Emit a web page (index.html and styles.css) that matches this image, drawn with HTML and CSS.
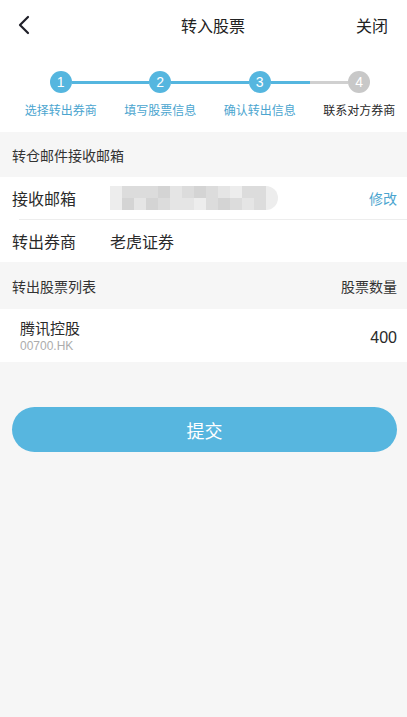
FILE: index.html
```html
<!DOCTYPE html>
<html lang="zh-CN">
<head>
    <meta charset="UTF-8">
    <meta name="viewport" content="width=device-width, initial-scale=1.0">
    <title>转入股票</title>
    <link rel="stylesheet" href="styles.css">
</head>
<body>
    <div class="top">
        <div class="nav">
            <div class="nav-back">
                <svg width="14" height="20" viewBox="0 0 14 20"><path d="M11 2 L3 10 L11 18" fill="none" stroke="#1f1f28" stroke-width="2.2" stroke-linecap="round" stroke-linejoin="round"/></svg>
            </div>
            <div class="nav-title">转入股票</div>
            <div class="nav-close">关闭</div>
        </div>

        <div class="steps">
            <div class="step done">
                <div class="step-track">
                    <span class="half none"></span>
                    <span class="dot">1</span>
                    <span class="half blue"></span>
                </div>
                <div class="step-label">选择转出券商</div>
            </div>
            <div class="step done">
                <div class="step-track">
                    <span class="half blue"></span>
                    <span class="dot">2</span>
                    <span class="half blue"></span>
                </div>
                <div class="step-label">填写股票信息</div>
            </div>
            <div class="step done">
                <div class="step-track">
                    <span class="half blue"></span>
                    <span class="dot">3</span>
                    <span class="half blue"></span>
                </div>
                <div class="step-label">确认转出信息</div>
            </div>
            <div class="step">
                <div class="step-track">
                    <span class="half gray"></span>
                    <span class="dot">4</span>
                    <span class="half none"></span>
                </div>
                <div class="step-label">联系对方券商</div>
            </div>
        </div>
    </div>

    <div class="section-head">转仓邮件接收邮箱</div>
    <div class="group">
        <div class="row">
            <span class="row-label">接收邮箱</span>
            <div class="mosaic">
                <i class="c1"></i><i class="c3"></i><i class="c3"></i><i class="c3"></i><i class="c2"></i><i class="c4"></i><i class="c3"></i><i class="c2"></i><i class="c3"></i><i class="c4"></i><i class="c1"></i><i class="c3"></i><i class="c3"></i><i class="c1"></i>
                <i class="c1"></i><i class="c2"></i><i class="c4"></i><i class="c2"></i><i class="c3"></i><i class="c4"></i><i class="c4"></i><i class="c1"></i><i class="c3"></i><i class="c2"></i><i class="c3"></i><i class="c4"></i><i class="c3"></i><i class="c1"></i>
            </div>
            <span class="row-link">修改</span>
        </div>
        <div class="divider"></div>
        <div class="row">
            <span class="row-label">转出券商</span>
            <span class="row-value">老虎证券</span>
        </div>
    </div>

    <div class="section-head split">
        <span>转出股票列表</span>
        <span>股票数量</span>
    </div>
    <div class="stock">
        <div class="stock-info">
            <div class="stock-name">腾讯控股</div>
            <div class="stock-code">00700.HK</div>
        </div>
        <div class="stock-qty">400</div>
    </div>

    <div class="actions">
        <button class="submit">提交</button>
    </div>
</body>
</html>
```

FILE: styles.css
```css
body {
    margin: 0;
    min-height: 100vh;
    background: #f6f6f6;
    font-family: "Noto Sans CJK SC", "Noto Sans", sans-serif;
    color: #2a2a2a;
}

.top {
    background: #fff;
    height: 132px;
}

.nav {
    height: 50px;
    display: flex;
    align-items: center;
    padding: 0 19px 0 17px;
}

.nav-back {
    width: 40px;
    display: flex;
    align-items: center;
}

.nav-title {
    flex: 1;
    text-align: center;
    font-size: 16px;
    color: #222;
    padding-left: 21px;
}

.nav-close {
    width: 40px;
    text-align: right;
    font-size: 16px;
    color: #222;
}

.steps {
    display: grid;
    grid-template-columns: repeat(4, 99.5px);
    padding: 21px 0 0 11px;
}

.step-track {
    display: flex;
    align-items: center;
    height: 22px;
}

.half {
    flex: 1;
    height: 3px;
}

.half.blue {
    background: #55b6df;
}

.half.gray {
    background: #d0d0d0;
}

.dot {
    width: 22px;
    height: 22px;
    border-radius: 50%;
    background: #c8c8c8;
    color: #fff;
    font-family: "Liberation Sans", sans-serif;
    font-size: 14px;
    line-height: 22px;
    text-align: center;
}

.step.done .dot {
    background: #55b6df;
}

.step-label {
    margin-top: 8px;
    text-align: center;
    font-size: 12px;
    color: #2a2a2a;
    white-space: nowrap;
}

.step.done .step-label {
    color: #4ba5cf;
}

.section-head {
    height: 45px;
    display: flex;
    align-items: center;
    padding: 0 10px 0 12px;
    font-size: 14px;
    color: #333;
}

.section-head.split {
    justify-content: space-between;
    height: 47px;
    padding-top: 1px;
    box-sizing: border-box;
}

.group {
    background: #fff;
}

.row {
    height: 42px;
    display: flex;
    align-items: center;
    padding: 0 10px 0 12px;
    font-size: 16px;
    color: #2a2a2a;
}

.divider {
    height: 1px;
    margin-left: 19px;
    background: #ededed;
}

.row-label {
    width: 98px;
    flex-shrink: 0;
}

.row-value {
    flex: 1;
}

.mosaic {
    display: grid;
    grid-template-columns: repeat(14, 12px);
    grid-template-rows: 12px 12px;
    border-radius: 0 12px 12px 0;
    overflow: hidden;
    margin-right: auto;
}

.mosaic i {
    display: block;
}

.c1 { background: #ededed; }
.c2 { background: #d4d4d4; }
.c3 { background: #dcdcdc; }
.c4 { background: #e5e5e5; }

.row-link {
    font-size: 14px;
    color: #4ba5cf;
}

.stock {
    background: #fff;
    height: 53px;
    display: flex;
    align-items: center;
    justify-content: space-between;
    padding: 0 10px 0 20px;
}

.stock-name {
    font-size: 15px;
    line-height: 20px;
    color: #2a2a2a;
}

.stock-code {
    font-family: "Liberation Sans", sans-serif;
    font-size: 12px;
    line-height: 14px;
    color: #acacac;
    margin-top: 1px;
}

.stock-qty {
    font-family: "Liberation Sans", sans-serif;
    font-size: 16px;
    color: #2a2a2a;
    padding-top: 4px;
}

.actions {
    padding: 45px 10px 0 12px;
}

.submit {
    display: block;
    width: 100%;
    height: 45px;
    border: none;
    border-radius: 23px;
    background: #57b6df;
    color: #fff;
    font-family: "Noto Sans CJK SC", sans-serif;
    font-size: 18px;
}
```
